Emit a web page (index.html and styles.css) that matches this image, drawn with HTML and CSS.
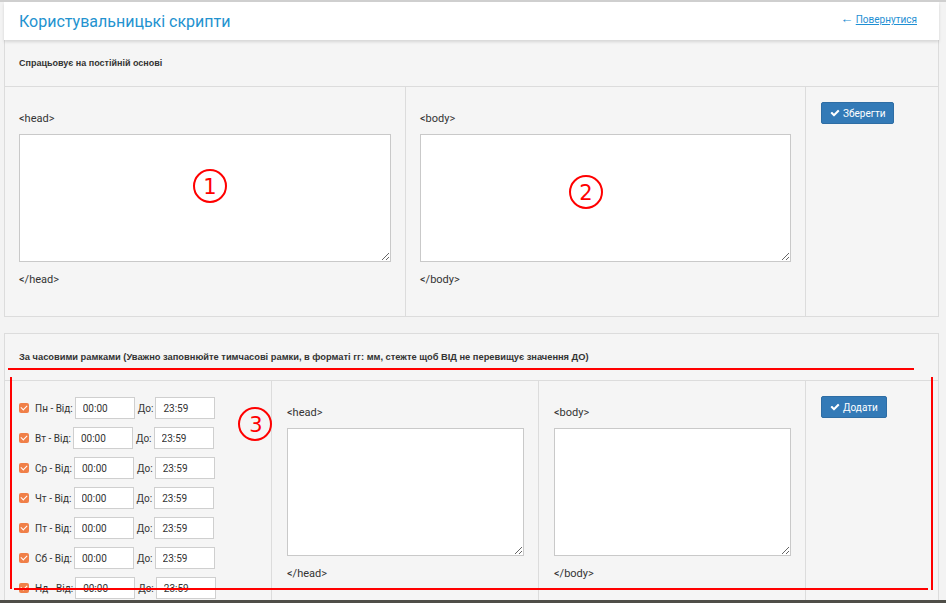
FILE: index.html
```html
<!DOCTYPE html>
<html lang="uk">
<head>
    <meta charset="UTF-8">
    <title>Користувальницькі скрипти</title>
    <link rel="stylesheet" href="styles.css">
</head>
<body>
    <div class="page">
        <header class="page-header">
            <h1 class="page-title">Користувальницькі скрипти</h1>
            <div class="back"><span class="back-arrow">&larr;</span> <a href="#">Повернутися</a></div>
        </header>

        <!-- always-on scripts -->
        <section class="panel">
            <div class="panel-title">Спрацьовує на постійній основі</div>
            <div class="panel-row row-static">
                <div class="col col-code">
                    <div class="tag">&lt;head&gt;</div>
                    <textarea class="code"></textarea>
                    <div class="tag tag-close">&lt;/head&gt;</div>
                </div>
                <div class="col col-code">
                    <div class="tag">&lt;body&gt;</div>
                    <textarea class="code"></textarea>
                    <div class="tag tag-close">&lt;/body&gt;</div>
                </div>
                <div class="col col-action">
                    <button class="btn"><svg class="btn-icon" viewBox="0 0 1792 1792"><path d="M1671 566q0 40-28 68l-724 724-136 136q-28 28-68 28t-68-28l-136-136-362-362q-28-28-28-68t28-68l136-136q28-28 68-28t68 28l294 295 656-657q28-28 68-28t68 28l136 136q28 28 28 68z"/></svg>Зберегти</button>
                </div>
            </div>
        </section>

        <!-- scheduled scripts -->
        <section class="panel panel-timed">
            <div class="panel-title">За часовими рамками (Уважно заповнюйте тимчасові рамки, в форматі гг: мм, стежте щоб ВІД не перевищує значення ДО)</div>
            <div class="panel-row row-timed">
                <div class="col col-days">
                    <div class="day"><span class="check"></span><span class="day-label">Пн - Від:</span><input class="time" value="00:00"><span class="to">До:</span><input class="time" value="23:59"></div>
                    <div class="day"><span class="check"></span><span class="day-label">Вт - Від:</span><input class="time" value="00:00"><span class="to">До:</span><input class="time" value="23:59"></div>
                    <div class="day"><span class="check"></span><span class="day-label">Ср - Від:</span><input class="time" value="00:00"><span class="to">До:</span><input class="time" value="23:59"></div>
                    <div class="day"><span class="check"></span><span class="day-label">Чт - Від:</span><input class="time" value="00:00"><span class="to">До:</span><input class="time" value="23:59"></div>
                    <div class="day"><span class="check"></span><span class="day-label">Пт - Від:</span><input class="time" value="00:00"><span class="to">До:</span><input class="time" value="23:59"></div>
                    <div class="day"><span class="check"></span><span class="day-label">Сб - Від:</span><input class="time" value="00:00"><span class="to">До:</span><input class="time" value="23:59"></div>
                    <div class="day"><span class="check"></span><span class="day-label">Нд - Від:</span><input class="time" value="00:00"><span class="to">До:</span><input class="time" value="23:59"></div>
                </div>
                <div class="col col-code">
                    <div class="tag">&lt;head&gt;</div>
                    <textarea class="code"></textarea>
                    <div class="tag tag-close">&lt;/head&gt;</div>
                </div>
                <div class="col col-code">
                    <div class="tag">&lt;body&gt;</div>
                    <textarea class="code"></textarea>
                    <div class="tag tag-close">&lt;/body&gt;</div>
                </div>
                <div class="col col-action">
                    <button class="btn"><svg class="btn-icon" viewBox="0 0 1792 1792"><path d="M1671 566q0 40-28 68l-724 724-136 136q-28 28-68 28t-68-28l-136-136-362-362q-28-28-28-68t28-68l136-136q28-28 68-28t68 28l294 295 656-657q28-28 68-28t68 28l136 136q28 28 28 68z"/></svg>Додати</button>
                </div>
            </div>
        </section>
    </div>

    <!-- red markup drawn on top of the page -->
    <svg class="marks" width="946" height="603" viewBox="0 0 946 603">
        <g fill="none" stroke="#ff0000" stroke-width="2">
            <circle cx="210" cy="186" r="16"/>
            <circle cx="586" cy="192" r="16"/>
            <circle cx="255" cy="424" r="16"/>
            <line x1="8" y1="369" x2="914" y2="369"/>
            <line x1="11" y1="377" x2="11" y2="589"/>
            <line x1="14" y1="589" x2="928" y2="589"/>
            <line x1="932" y1="377" x2="932" y2="590"/>
        </g>
        <g fill="#ff0000" font-family="'DejaVu Sans', sans-serif" font-size="21" text-anchor="middle">
            <text x="210" y="194">1</text>
            <text x="586" y="200">2</text>
            <text x="256" y="432">3</text>
        </g>
    </svg>

    <div class="bottom-strip"></div>
</body>
</html>
```

FILE: styles.css
```css
body {
    margin: 0;
    background-color: #f3f3f3;
    font-family: Roboto, 'Liberation Sans', sans-serif;
    color: #333;
    border-top: 2px solid #cfcfcf;
}

.page {
    padding: 0 7px 0 4px;
}

/* top bar */
.page-header {
    position: relative;
    z-index: 1;
    display: flex;
    justify-content: space-between;
    align-items: flex-start;
    height: 38px;
    box-sizing: border-box;
    padding: 10px 22px 0 15px;
    background: #fff;
    box-shadow: 0 2px 3px rgba(0, 0, 0, 0.13);
}

.page-title {
    margin: 0;
    font-size: 16px;
    font-weight: 400;
    line-height: 19px;
    color: #2392cf;
}

.back {
    font-size: 10px;
    line-height: 14px;
    color: #1f8fd3;
}

.back-arrow {
    font-size: 13px;
    font-weight: 700;
}

.back a {
    color: #1f8fd3;
}

/* panels */
.panel {
    background: #f5f5f5;
    border: 1px solid #dcdcdc;
    border-top: none;
}

.panel-timed {
    margin-top: 16px;
    border-top: 1px solid #dcdcdc;
}

.panel-title {
    height: 46px;
    display: flex;
    align-items: center;
    padding: 0 14px;
    font-family: 'Liberation Sans', Arial, sans-serif;
    font-size: 9px;
    font-weight: 700;
    color: #333;
    border-bottom: 1px solid #dcdcdc;
}

.panel-timed .panel-title {
    font-size: 9.3px;
}

.panel-row {
    display: grid;
}

.row-static {
    grid-template-columns: 400px 400px 1fr;
}

.row-timed {
    grid-template-columns: 266px 267px 267px 1fr;
}

.col {
    border-left: 1px solid #dcdcdc;
    box-sizing: border-box;
}

.col:first-child {
    border-left: none;
}

.col-code {
    padding: 24px 14px 29px 14px;
}

.row-timed .col-code {
    padding-left: 15px;
}

.col-action {
    padding: 15px 15px 0 15px;
}

.tag {
    font-size: 11px;
    line-height: 15px;
    margin-bottom: 8px;
}

.tag-close {
    margin: 10px 0 0;
}

.code {
    display: block;
    width: 100%;
    height: 128px;
    box-sizing: border-box;
    margin: 0;
    border: 1px solid #c9c9c9;
    background: #fff;
}

/* buttons */
.btn {
    display: flex;
    align-items: center;
    height: 22px;
    padding: 0 8px;
    border: 1px solid #2e6da4;
    border-radius: 2px;
    background: #337ab7;
    color: #fff;
    font-family: Roboto, 'Liberation Sans', sans-serif;
    font-size: 10px;
}

.btn-icon {
    width: 10px;
    height: 10px;
    fill: #fff;
    margin-right: 3px;
}

/* day schedule */
.col-days {
    padding: 16px 0 0 14px;
}

.day {
    display: flex;
    align-items: center;
    height: 22px;
    margin-bottom: 8px;
    font-size: 10px;
}

.check {
    width: 10px;
    height: 10px;
    border-radius: 2px;
    background: #f07f48;
    margin-right: 6px;
    position: relative;
}

.check::after {
    content: '';
    position: absolute;
    left: 3px;
    top: 1px;
    width: 3px;
    height: 5px;
    border: solid #fff;
    border-width: 0 1.5px 1.5px 0;
    transform: rotate(45deg);
}

.day-label {
    margin-right: 2px;
}

.time {
    width: 60px;
    height: 22px;
    box-sizing: border-box;
    padding: 0 7px;
    border: 1px solid #cfcfcf;
    background: #fff;
    font-family: Roboto, 'Liberation Sans', sans-serif;
    font-size: 10px;
    color: #333;
}

.to {
    margin: 0 2px 0 3px;
}

.marks {
    position: absolute;
    top: 0;
    left: 0;
    pointer-events: none;
}

.bottom-strip {
    position: fixed;
    left: 0;
    right: 0;
    bottom: 0;
    height: 3px;
    background: #4f4e48;
}
```
